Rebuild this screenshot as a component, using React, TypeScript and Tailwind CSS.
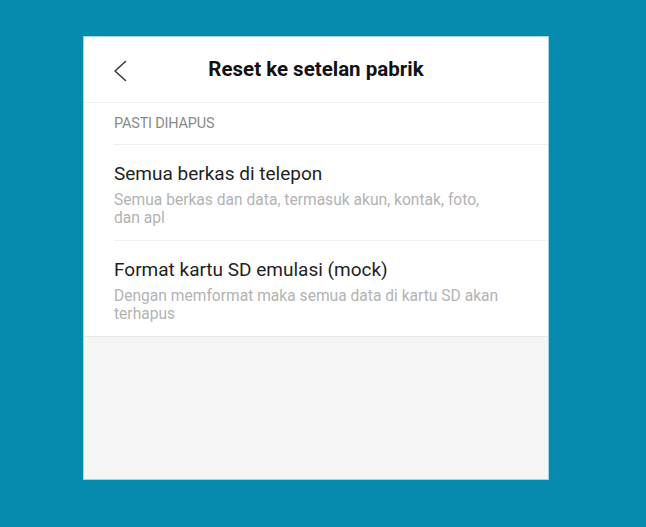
import React from "react";

export default function App() {
  return (
    <div
      className="w-[646px] h-[527px] bg-[#068bae] pt-[36px] pl-[83px]"
      style={{ fontFamily: "Roboto, 'Noto Sans', sans-serif" }}
    >
      <div className="w-[466px] h-[444px] bg-[#f5f5f5] border border-[#9fd4e3] flex flex-col">
        <div className="bg-white">
          {/* header */}
          <div className="relative h-[66px] flex items-center justify-center border-b border-[#f0f0f0]">
            <svg
              className="absolute left-[29px] top-[23px]"
              width="14"
              height="22"
              viewBox="0 0 14 22"
              fill="none"
            >
              <polyline
                points="12.5,1.5 2,11 12.5,20.5"
                stroke="#3a3a3a"
                strokeWidth="1.6"
                strokeLinecap="round"
                strokeLinejoin="round"
              />
            </svg>
            <div className="text-[20.5px] font-bold text-[#111] leading-none">
              Reset ke setelan pabrik
            </div>
          </div>
          {/* section header */}
          <div className="h-[41px] flex items-center pl-[30px] text-[14.5px] text-[#8a8a8a] tracking-[-0.2px]">
            PASTI DIHAPUS
          </div>
          <div className="ml-[30px] border-b border-[#eeeeee]" />
          {/* item 1 */}
          <div className="h-[95px] pl-[30px] pt-[17px]">
            <div className="text-[19px] leading-[24px] text-[#1f1f1f]">
              Semua berkas di telepon
            </div>
            <div className="mt-[5px] max-w-[391px] text-[15.6px] leading-[18px] text-[#b3b3b3]">
              Semua berkas dan data, termasuk akun, kontak, foto, dan apl
            </div>
          </div>
          <div className="ml-[30px] border-b border-[#f0f0f0]" />
          {/* item 2 */}
          <div className="h-[95px] pl-[30px] pt-[17px]">
            <div className="text-[19px] leading-[24px] text-[#1f1f1f]">
              Format kartu SD emulasi (mock)
            </div>
            <div className="mt-[5px] max-w-[391px] text-[15.6px] leading-[18px] text-[#b3b3b3]">
              Dengan memformat maka semua data di kartu SD akan terhapus
            </div>
          </div>
        </div>
        <div className="border-t border-[#e8e8e8]" />
      </div>
    </div>
  );
}
